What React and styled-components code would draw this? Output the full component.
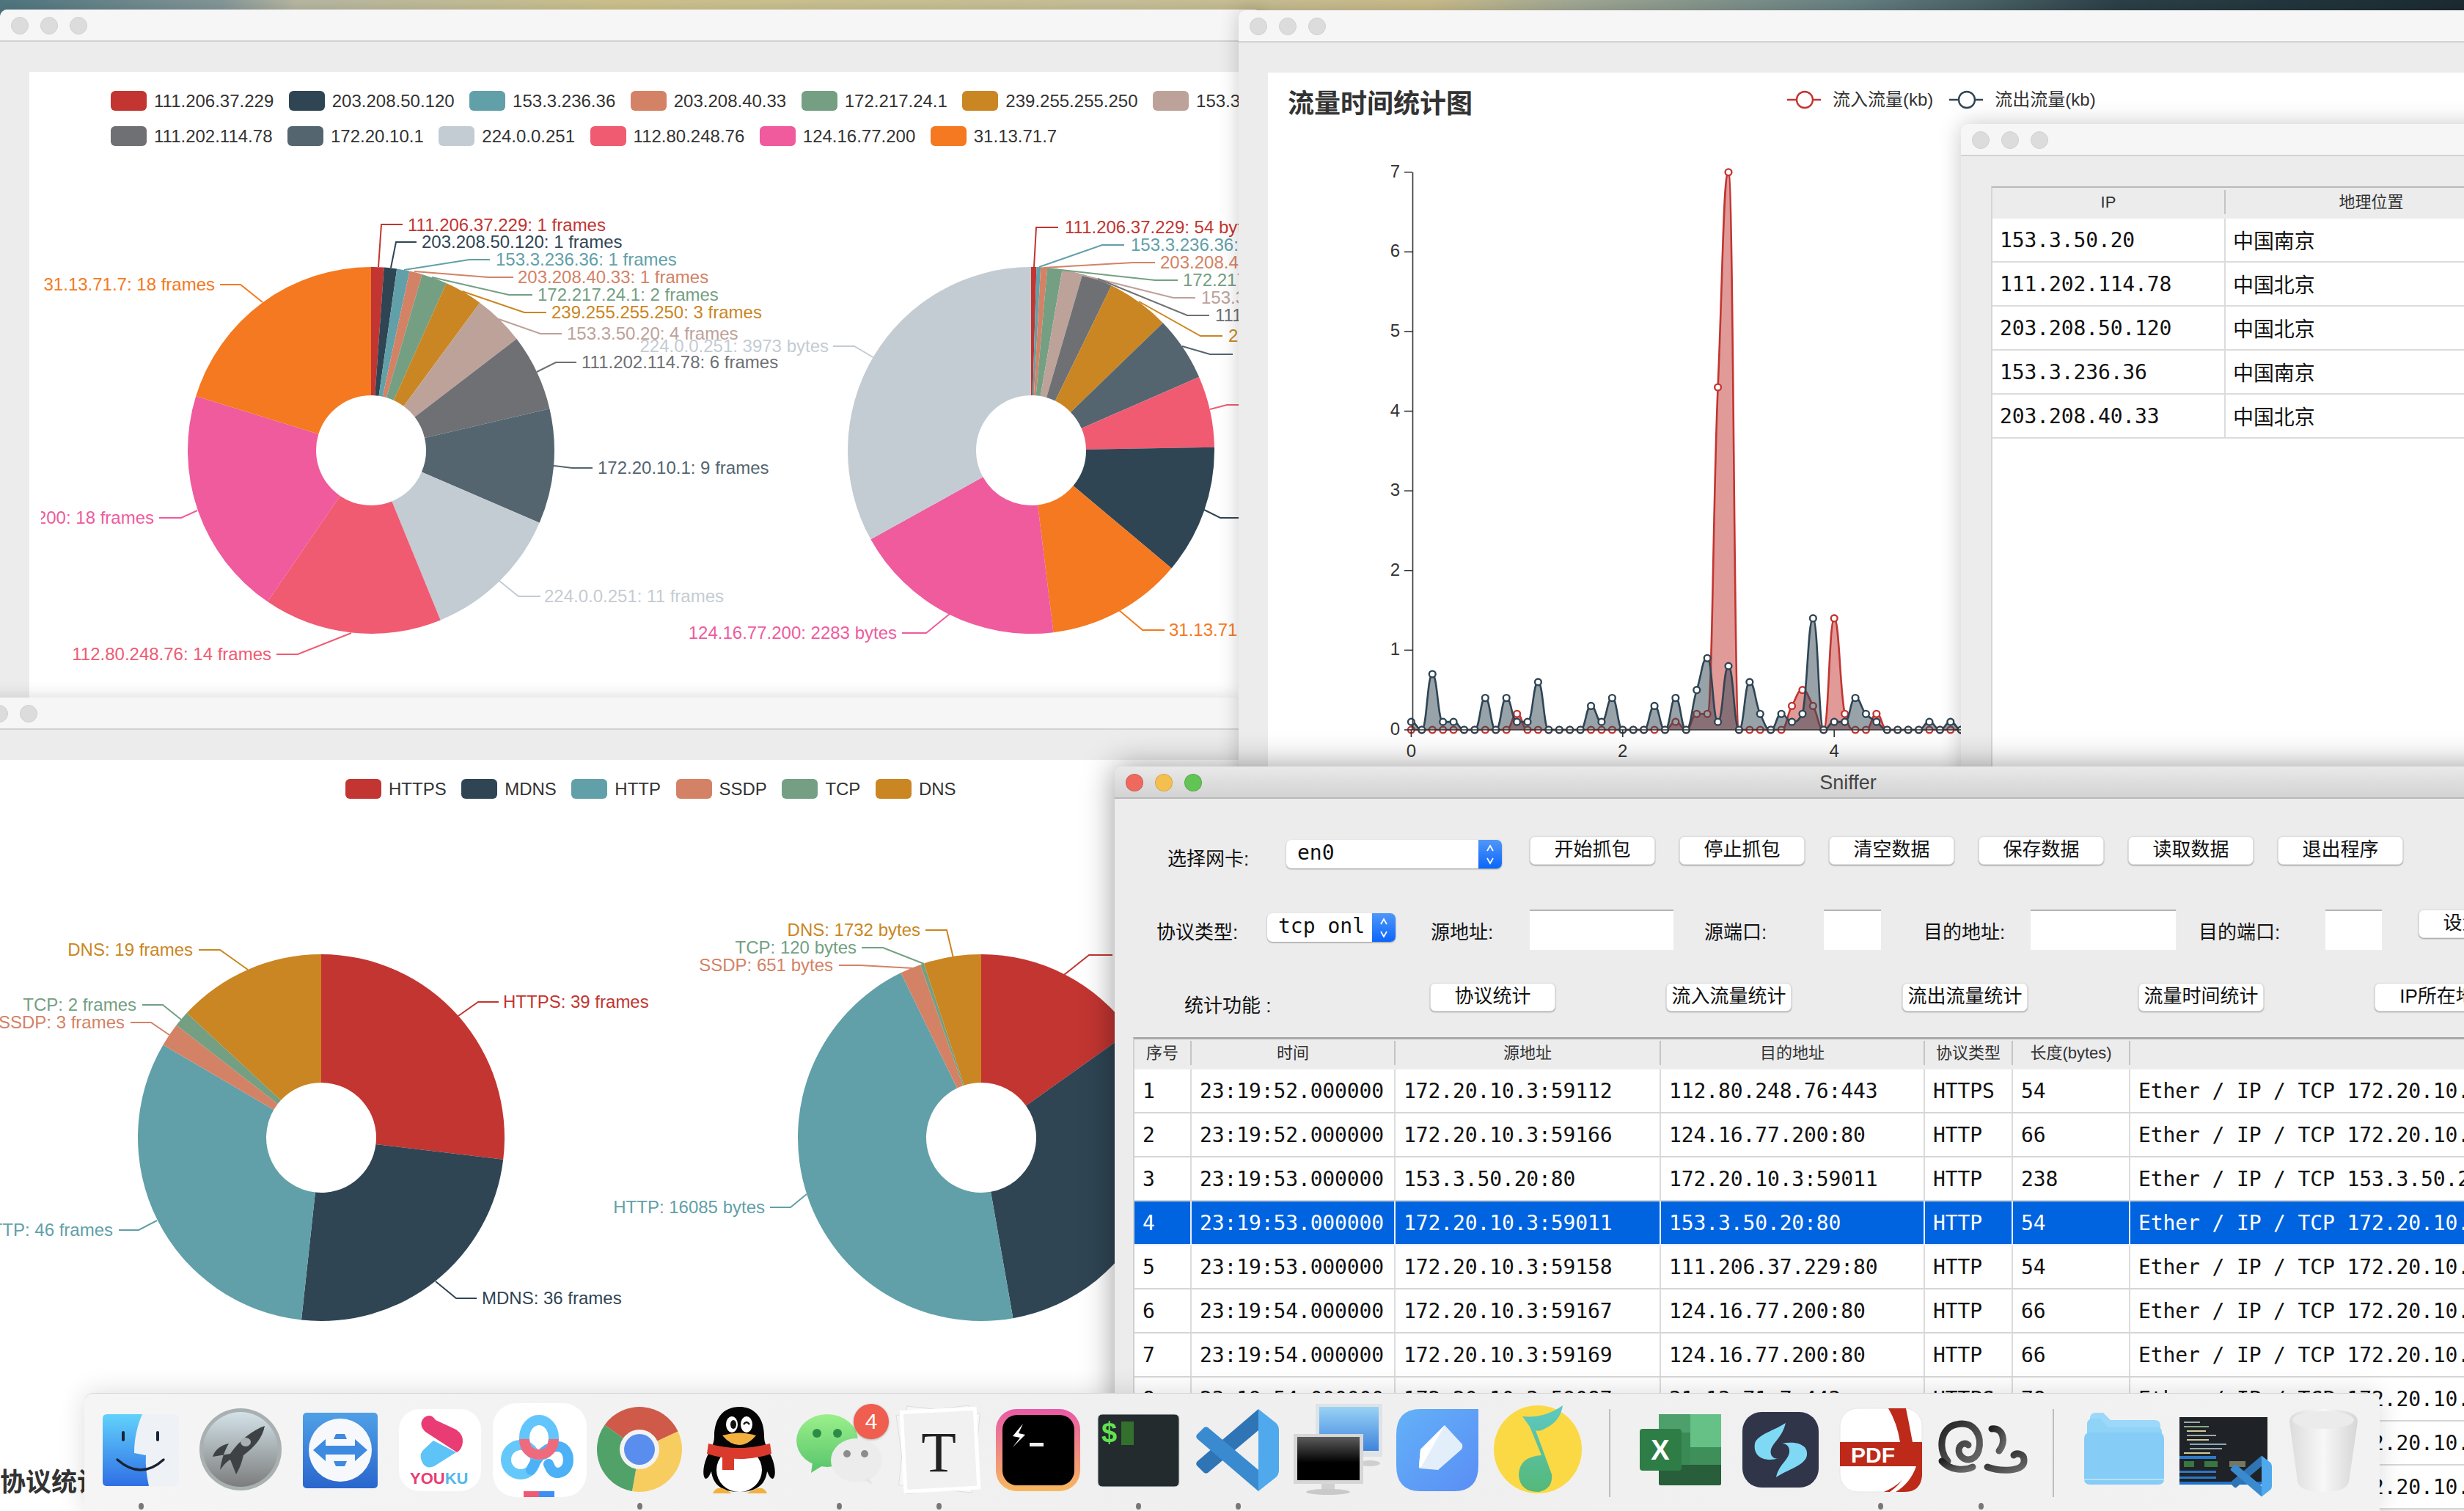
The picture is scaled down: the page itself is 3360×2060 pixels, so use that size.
import React from 'react'
import styled, { createGlobalStyle } from 'styled-components'

const SANS = '"Liberation Sans", "Noto Sans CJK SC", sans-serif'
const MONO = '"DejaVu Sans Mono", "Noto Sans CJK SC", monospace'

const GlobalStyle = createGlobalStyle`
    html, body {
        margin: 0;
        padding: 0;
        background: #ececec;
        overflow: hidden;
    }
    * { box-sizing: border-box; }
`

const Desktop = styled.div`
    position: relative;
    width: 3360px;
    height: 2060px;
    overflow: hidden;
    font-family: ${SANS};
    background: linear-gradient(90deg, #4f7680 0%, #86999a 9%, #b9b9a4 12%, #cfc48e 25%, #c9c29a 45%, #cdbf8e 58%, #a3ab97 64%, #6a8486 75%, #2c4249 86%, #1c2c33 100%);
`

const Window = styled.section`
    position: absolute;
    left: ${p => p.$x}px;
    top: ${p => p.$y}px;
    width: ${p => p.$w}px;
    height: ${p => p.$h}px;
    display: flex;
    flex-direction: column;
    background: #ececec;
    border-radius: 10px 10px 0 0;
    overflow: hidden;
    box-shadow: 0 0 ${p => p.$shadow || 24}px rgba(0, 0, 0, ${p => p.$alpha || 0.16});
`

const TitleBar = styled.header`
    flex: none;
    height: 44px;
    display: flex;
    align-items: center;
    gap: 16px;
    padding: 2px 0 0 15px;
    position: relative;
    background: ${p => p.$active ? 'linear-gradient(#e9e9e9, #d3d3d3)' : '#f6f6f6'};
    border-bottom: 2px solid ${p => p.$active ? '#b9b9b9' : '#d2d2d2'};
`

const Light = styled.span`
    width: 24px;
    height: 24px;
    border-radius: 50%;
    background: ${p => p.$c || '#dcdcdc'};
    border: 1px solid ${p => p.$c ? 'rgba(0,0,0,.12)' : '#d0d0d0'};
`

const WindowTitle = styled.div`
    position: absolute;
    left: 0;
    right: 0;
    text-align: center;
    font-size: 27px;
    color: #444;
`

const ChartPanel = styled.div`
    flex: 1;
    margin-top: ${p => p.$mt || 41}px;
    margin-left: 40px;
    background: #fff;
    display: flex;
    flex-direction: column;
    padding-left: ${p => p.$pl || 0}px;
    min-height: 0;
`

const LegendBar = styled.div`
    height: ${p => p.$h}px;
    flex: none;
    width: ${p => p.$w}px;
    padding: 26px 0 0 ${p => p.$pl}px;
    display: flex;
    flex-wrap: wrap;
    align-content: flex-start;
    gap: 21px 20.5px;
`

const LegendItem = styled.div`
    display: flex;
    align-items: center;
    gap: 10px;
    height: 27px;
    font-size: 24px;
    color: #333;
    white-space: nowrap;
`

const Swatch = styled.span`
    width: 49px;
    height: 27px;
    border-radius: 6px;
    background: ${p => p.$c};
`

const ChartSvg = styled.svg`
    display: block;
    flex: none;
    font-family: ${SANS};
    font-size: 24px;
`

const ChartHead = styled.div`
    flex: none;
    height: 102px;
    display: flex;
    align-items: flex-start;
    padding-left: 27px;
`

const ChartTitle = styled.h2`
    margin: 18px 0 0;
    font-size: 36px;
    line-height: 50px;
    font-weight: 700;
    color: #333;
    font-family: ${SANS};
`

const LineLegend = styled.div`
    display: flex;
    align-items: center;
    margin: 24px 0 0 ${p => p.$ml}px;
    font-size: 24px;
    line-height: 26px;
    color: #333;
    gap: 16px;
`

const BottomTitle = styled.div`
    flex: none;
    padding-left: 28px;
    font-size: 35px;
    font-weight: 700;
    line-height: 42px;
    color: #333;
    white-space: nowrap;
`

const IpTable = styled.div`
    flex: 1;
    margin: 41px 0 0 41px;
    background: #fff;
    border-left: 2px solid #d6d6d6;
    border-top: 2px solid #b9b9b9;
`

const IpRow = styled.div`
    display: grid;
    grid-template-columns: 318px 1fr;
    height: ${p => p.$head ? 42 : 60}px;
    padding-top: ${p => p.$head ? 3 : 0}px;
    background: ${p => p.$head ? '#ececec' : '#fff'};
    border-bottom: ${p => p.$head ? 'none' : '2px solid #dcdcdc'};
    align-items: ${p => p.$head ? 'flex-start' : 'stretch'};
`

const HeadCell = styled.div`
    font-size: 22px;
    text-align: center;
    color: #333;
    height: 33px;
    line-height: 33px;
    border-right: 2px solid #c4c4c4;
    white-space: nowrap;
`

const DataCell = styled.div`
    font-family: ${MONO};
    font-size: 28px;
    letter-spacing: -0.12px;
    display: flex;
    align-items: center;
    padding-left: ${p => p.$pad || 10}px;
    white-space: nowrap;
    overflow: hidden;
    color: ${p => p.$sel ? '#fff' : '#111'};
    border-right: 2px solid ${p => p.$sel ? '#e8f0fc' : '#dcdcdc'};
`

const SnifferBody = styled.div`
    flex: 1;
    padding-top: 51px;
    display: flex;
    flex-direction: column;
`

const ControlRow = styled.div`
    flex: none;
    height: ${p => p.$h || 100}px;
    padding-left: ${p => p.$pl}px;
    display: flex;
    align-items: flex-start;
`

const FieldLabel = styled.label`
    flex: none;
    width: ${p => p.$w}px;
    margin: 12px 0 0 ${p => p.$ml || 0}px;
    font-size: 26px;
    line-height: 38px;
    color: #111;
    white-space: nowrap;
`

const Combo = styled.div`
    flex: none;
    width: ${p => p.$w}px;
    height: 39px;
    margin: 5px 0 0 ${p => p.$ml}px;
    display: flex;
    background: #fff;
    border-radius: 7px;
    box-shadow: 0 1px 2px rgba(0, 0, 0, .4);
    font-family: ${MONO};
    font-size: 28px;
    line-height: 36px;
    color: #111;
    overflow: hidden;
`

const ComboValue = styled.span`
    flex: 1;
    padding-left: 15px;
    white-space: nowrap;
    overflow: hidden;
`

const Stepper = styled.span`
    flex: none;
    width: 32px;
    display: flex;
    align-items: center;
    justify-content: center;
    background: linear-gradient(#4f97f8, #0b66fb);
`

const PushButton = styled.button`
    flex: none;
    width: 171px;
    height: 39px;
    margin-left: ${p => p.$ml || 0}px;
    padding: 0;
    background: #fff;
    border: 1px solid #dedede;
    border-radius: 7px;
    box-shadow: 0 1px 2px rgba(0, 0, 0, .35);
    font-family: ${SANS};
    font-size: 26px;
    line-height: 34px;
    color: #111;
    white-space: nowrap;
    display: flex;
    justify-content: center;
`

const LineInput = styled.div`
    flex: none;
    width: ${p => p.$w}px;
    height: 55px;
    margin-left: ${p => p.$ml}px;
    background: #fff;
    border-top: 2px solid #b4b4b4;
`

const PacketTable = styled.div`
    margin-left: 25px;
    background: #fff;
    border-left: 2px solid #d0d0d0;
    border-top: 3px solid #a8a8a8;
`

const PacketRow = styled.div`
    display: grid;
    grid-template-columns: 78px 278px 362px 360px 120px 160px 1fr;
    height: ${p => p.$head ? 41 : 60}px;
    padding-top: ${p => p.$head ? 2 : 0}px;
    background: ${p => p.$head ? '#ececec' : p.$sel ? '#0064e1' : '#fff'};
    border-bottom: ${p => p.$head ? 'none' : `2px solid ${p.$sel ? '#e8f0fc' : '#d6d6d6'}`};
    align-items: ${p => p.$head ? 'flex-start' : 'stretch'};
`

const Dock = styled.nav`
    position: absolute;
    left: 115px;
    top: 1899px;
    width: 3130px;
    height: 161px;
    display: flex;
    padding: 0 9px;
    background: linear-gradient(90deg, #f5f5f5, #efefef 50%, #f2f2f2);
    border-radius: 12px 12px 0 0;
    border-top: 1px solid #d4d4d4;
    box-shadow: 0 0 36px rgba(0, 0, 0, .14);
`

const DockSlot = styled.div`
    position: relative;
    flex: none;
    width: ${p => p.$w || 136}px;
    height: 160px;
    display: flex;
    flex-direction: column;
    align-items: center;
`

const DockArt = styled.svg`
    display: block;
    flex: none;
`

const RunDot = styled.span`
    width: 7px;
    height: 9px;
    margin-top: 8px;
    border-radius: 50%;
    background: ${p => p.$on ? '#777' : 'transparent'};
`

const Badge = styled.span`
    position: absolute;
    left: 88px;
    top: 14px;
    width: 48px;
    height: 48px;
    border-radius: 50%;
    background: #ef5e4e;
    color: #fff;
    font-size: 30px;
    line-height: 48px;
    text-align: center;
    box-shadow: 0 1px 3px rgba(0, 0, 0, .3);
`

const DockDivider = styled.span`
    flex: none;
    align-self: flex-start;
    width: 2px;
    height: 120px;
    margin: 21px ${p => p.$mr}px 0 ${p => p.$ml}px;
    background: #bdbdbd;
`

// echarts default palette
const C = {
    red: '#c23531', dark: '#2f4554', teal: '#61a0a8', coral: '#d48265', green: '#749f83', gold: '#ca8622',
    taupe: '#bda29a', gray: '#6e7074', slate: '#546570', pale: '#c4ccd3', rose: '#f05b72', pink: '#ef5b9c', orange: '#f47920',
}

const ipLegend = [
    ['111.206.37.229', C.red], ['203.208.50.120', C.dark], ['153.3.236.36', C.teal], ['203.208.40.33', C.coral],
    ['172.217.24.1', C.green], ['239.255.255.250', C.gold], ['153.3.50.20', C.taupe], ['111.202.114.78', C.gray],
    ['172.20.10.1', C.slate], ['224.0.0.251', C.pale], ['112.80.248.76', C.rose], ['124.16.77.200', C.pink], ['31.13.71.7', C.orange],
]
const protoLegend = [['HTTPS', C.red], ['MDNS', C.dark], ['HTTP', C.teal], ['SSDP', C.coral], ['TCP', C.green], ['DNS', C.gold]]

function polar(cx, cy, r, deg) {
    const a = (deg - 90) * Math.PI / 180
    return [cx + r * Math.cos(a), cy + r * Math.sin(a)]
}

function slicePath(cx, cy, r0, r1, a0, a1) {
    const large = a1 - a0 > 180 ? 1 : 0
    const [x0, y0] = polar(cx, cy, r1, a0)
    const [x1, y1] = polar(cx, cy, r1, a1)
    if (r0 === 0) return `M${cx} ${cy}L${x0} ${y0}A${r1} ${r1} 0 ${large} 1 ${x1} ${y1}Z`
    const [x2, y2] = polar(cx, cy, r0, a1)
    const [x3, y3] = polar(cx, cy, r0, a0)
    return `M${x0} ${y0}A${r1} ${r1} 0 ${large} 1 ${x1} ${y1}L${x2} ${y2}A${r0} ${r0} 0 ${large} 0 ${x3} ${y3}Z`
}

// stops: clockwise end angle of each slice, colours in the same order
function Pie({ cx, cy, stops, colors, labels }) {
    return (
        <g>
            {stops.map((end, i) => (
                <path key={i} d={slicePath(cx, cy, 75, 250, i ? stops[i - 1] : 0, end)} fill={colors[i]} />
            ))}
            {labels.map(([text, color, x, y, pts, anchor], i) => (
                <g key={i}>
                    <polyline points={pts} fill="none" stroke={color} strokeWidth="2" />
                    <text x={x} y={y + 8} fill={color} textAnchor={anchor || 'start'}>{text}</text>
                </g>
            ))}
        </g>
    )
}

const framesColors = [C.red, C.dark, C.teal, C.coral, C.green, C.gold, C.taupe, C.gray, C.slate, C.pale, C.rose, C.pink, C.orange]
const frameCounts = [1, 1, 1, 1, 2, 3, 4, 6, 9, 11, 14, 18, 18]
const frameStops = frameCounts.reduce((acc, n) => [...acc, (acc.length ? acc[acc.length - 1] : 0) + n * 360 / 89], [])

const frameLabels = [
    ['111.206.37.229: 1 frames', C.red, 556, 307, '516,364 520,306 549,306'],
    ['203.208.50.120: 1 frames', C.dark, 575, 330, '533,365 540,330 568,330'],
    ['153.3.236.36: 1 frames', C.teal, 676, 354, '551,368 640,354 668,354'],
    ['203.208.40.33: 1 frames', C.coral, 706, 378, '565,370 666,378 700,378'],
    ['172.217.24.1: 2 frames', C.green, 733, 402, '589,378 694,402 726,402'],
    ['239.255.255.250: 3 frames', C.gold, 752, 426, '630,397 715,426 745,426'],
    ['153.3.50.20: 4 frames', C.taupe, 773, 455, '680,435 737,455 766,455'],
    ['111.202.114.78: 6 frames', C.gray, 793, 494, '732,507 758,494 786,494'],
    ['172.20.10.1: 9 frames', C.slate, 815, 638, '755,635 780,638 808,638'],
    ['224.0.0.251: 11 frames', C.pale, 742, 813, '681,792 707,813 737,813'],
    ['112.80.248.76: 14 frames', C.rose, 370, 892, '479,863 406,892 377,892', 'end'],
    ['124.16.77.200: 18 frames', C.pink, 210, 706, '269,696 247,706 217,706', 'end'],
    ['31.13.71.7: 18 frames', C.orange, 293, 388, '358,412 328,388 300,388', 'end'],
]

const byteColors = [C.red, C.teal, C.coral, C.green, C.taupe, C.gray, C.gold, C.slate, C.rose, C.dark, C.orange, C.pink, C.pale]
const byteStops = [1.7, 3, 5.1, 9.8, 16.3, 26, 46, 66.4, 89, 130, 173, 241, 360]
const byteLabels = [
    ['111.206.37.229: 54 bytes', C.red, 1452, 310, '1410,364 1413,310 1443,310'],
    ['153.3.236.36: 54 bytes', C.teal, 1542, 334, '1417,364 1503,334 1533,334'],
    ['203.208.40.33: 66 bytes', C.coral, 1582, 358, '1423,365 1545,358 1575,358'],
    ['172.217.24.1: 132 bytes', C.green, 1613, 382, '1438,367 1575,382 1606,382'],
    ['153.3.50.20: 238 bytes', C.taupe, 1638, 406, '1463,372 1600,406 1630,406'],
    ['111.202.114.78: 330 bytes', C.gray, 1657, 430, '1497,380 1619,430 1649,430'],
    ['239.255.255.250: 651 bytes', C.gold, 1675, 458, '1553,411 1637,458 1667,458'],
    ['172.20.10.1: 680 bytes', C.slate, 1689, 483, '1612,472 1650,483 1681,483'],
    ['112.80.248.76: 756 bytes', C.rose, 1698, 552, '1650,558 1673,552 1692,552'],
    ['203.208.50.120: 1380 bytes', C.dark, 1700, 706, '1642,695 1664,706 1697,706'],
    ['31.13.71.7: 1456 bytes', C.orange, 1594, 859, '1526,832 1558,859 1588,859'],
    ['124.16.77.200: 2283 bytes', C.pink, 1223, 863, '1295,837 1263,863 1230,863', 'end'],
    ['224.0.0.251: 3973 bytes', C.pale, 1130, 472, '1192,488 1165,472 1136,472', 'end'],
]

const protoColors = [C.red, C.dark, C.teal, C.coral, C.green, C.gold]
const protoFrameStops = [39, 75, 121, 124, 126, 145].map(n => n * 360 / 145)
const protoFrameLabels = [
    ['DNS: 19 frames', C.gold, 263, 1295, '338,1322 300,1295 271,1295', 'end'],
    ['TCP: 2 frames', C.green, 186, 1370, '247,1390 222,1370 194,1370', 'end'],
    ['SSDP: 3 frames', C.coral, 170, 1394, '231,1411 206,1394 178,1394', 'end'],
    ['HTTPS: 39 frames', C.red, 686, 1366, '625,1385 652,1366 680,1366'],
    ['HTTP: 46 frames', C.teal, 154, 1677, '214,1664 189,1677 162,1677', 'end'],
    ['MDNS: 36 frames', C.dark, 657, 1770, '594,1747 622,1770 650,1770'],
]
const protoByteStops = [54.5, 170, 334, 340.6, 341.8, 360]
const protoByteLabels = [
    ['DNS: 1732 bytes', C.gold, 1255, 1268, '1300,1306 1291,1268 1262,1268', 'end'],
    ['TCP: 120 bytes', C.green, 1168, 1292, '1260,1314 1204,1292 1175,1292', 'end'],
    ['SSDP: 651 bytes', C.coral, 1136, 1316, '1245,1320 1173,1316 1144,1316', 'end'],
    ['HTTP: 16085 bytes', C.teal, 1043, 1646, '1100,1628 1078,1646 1050,1646', 'end'],
    ['HTTPS: 5320 bytes', C.red, 1524, 1302, '1451,1329 1485,1302 1517,1302'],
]

// flow over time, one value every 0.1 on the x axis
const inFlow = {10: .2, 25: .1, 27: .2, 28: .2, 29: 4.3, 30: 7, 36: .3, 37: .5, 38: .3, 40: 1.4, 41: .2, 44: .2}
const outFlow = {0: .1, 2: .7, 3: .1, 4: .1, 7: .4, 9: .4, 10: .1, 11: .1, 12: .6, 17: .3, 18: .1, 19: .4, 23: .3, 25: .4, 27: .5, 28: .9, 29: .1, 30: .8, 32: .6, 33: .2, 35: .2, 36: .1, 37: .2, 38: 1.4, 40: .1, 41: .1, 42: .4, 43: .2, 44: .1, 49: .1, 51: .1}

const X0 = 1925.4
const Y0 = 994
const toPoints = (series) => Array.from({ length: 54 }, (_, i) => [X0 + i * 14.42, Y0 - (series[i] || 0) * 108.6])

function smoothLine(pts) {
    let d = `M${pts[0][0]} ${pts[0][1]}`
    const clamp = (v, a, b) => Math.min(Math.max(v, Math.min(a, b)), Math.max(a, b))
    // flat tangent on local peaks and valleys, like the echarts monotone smoothing
    const slope = (a, b, c) => ((b[1] - a[1]) * (c[1] - b[1]) <= 0 ? 0 : (c[1] - a[1]) * 0.22)
    for (let i = 0; i < pts.length - 1; i++) {
        const p0 = pts[Math.max(i - 1, 0)], p1 = pts[i], p2 = pts[i + 1], p3 = pts[Math.min(i + 2, pts.length - 1)]
        const c1y = clamp(p1[1] + slope(p0, p1, p2), p1[1], p2[1])
        const c2y = clamp(p2[1] - slope(p1, p2, p3), p1[1], p2[1])
        d += `C${p1[0] + 7} ${c1y} ${p2[0] - 7} ${c2y} ${p2[0]} ${p2[1]}`
    }
    return d
}

function FlowSeries({ data, color }) {
    const pts = toPoints(data)
    const line = smoothLine(pts)
    return (
        <g>
            <path d={`${line}L${pts[pts.length - 1][0]} ${Y0}L${X0} ${Y0}Z`} fill={color} fillOpacity=".5" />
            <path d={line} fill="none" stroke={color} strokeWidth="2.6" />
            {pts.map(([x, y], i) => <circle key={i} cx={x} cy={y} r="4.4" fill="#fff" stroke={color} strokeWidth="2.4" />)}
        </g>
    )
}

function FlowChart() {
    return (
        <ChartSvg viewBox="1730 200 960 860" width="960" height="860">
            <FlowSeries data={inFlow} color={C.red} />
            <FlowSeries data={outFlow} color={C.dark} />
            <path d={`M1927.5 234V${Y0}H2700`} fill="none" stroke="#333" strokeWidth="1.6" />
            {[0, 1, 2, 3, 4, 5, 6, 7].map(n => (
                <g key={n}>
                    <path d={`M1916 ${Y0 - n * 108.6}H1927`} stroke="#333" strokeWidth="1.6" />
                    <text x="1910" y={Y0 - n * 108.6 + 7} textAnchor="end" fill="#333">{n}</text>
                </g>
            ))}
            {[0, 2, 4].map(n => (
                <g key={n}>
                    <path d={`M${X0 + n * 144.2} ${Y0}V${Y0 + 10}`} stroke="#333" strokeWidth="1.6" />
                    <text x={X0 + n * 144.2} y="1031" textAnchor="middle" fill="#333">{n}</text>
                </g>
            ))}
        </ChartSvg>
    )
}

function LegendMarker({ color }) {
    return (
        <svg width="46" height="26" viewBox="0 0 46 26">
            <path d="M0 13H46" stroke={color} strokeWidth="2.4" />
            <circle cx="24" cy="13" r="11" fill="#fff" stroke={color} strokeWidth="2.4" />
        </svg>
    )
}

function StepArrows() {
    return (
        <svg width="14" height="30" viewBox="0 0 14 30" fill="none" stroke="#fff" strokeWidth="1.8">
            <path d="M3 10L7 3L11 10" />
            <path d="M3 20L7 27L11 20" />
        </svg>
    )
}

function Lights({ active }) {
    return (
        <>
            <Light $c={active ? '#ee6a5f' : undefined} />
            <Light $c={active ? '#f5bf4f' : undefined} />
            <Light $c={active ? '#61c454' : undefined} />
        </>
    )
}

const ipRows = [
    ['153.3.50.20', '中国南京'], ['111.202.114.78', '中国北京'], ['203.208.50.120', '中国北京'],
    ['153.3.236.36', '中国南京'], ['203.208.40.33', '中国北京'],
]

const packetHead = ['序号', '时间', '源地址', '目的地址', '协议类型', '长度(bytes)', '']
const packets = [
    ['1', '23:19:52.000000', '172.20.10.3:59112', '112.80.248.76:443', 'HTTPS', '54', 'Ether / IP / TCP 172.20.10.3:59112 > 112.80.248.76:https A'],
    ['2', '23:19:52.000000', '172.20.10.3:59166', '124.16.77.200:80', 'HTTP', '66', 'Ether / IP / TCP 172.20.10.3:59166 > 124.16.77.200:http S'],
    ['3', '23:19:53.000000', '153.3.50.20:80', '172.20.10.3:59011', 'HTTP', '238', 'Ether / IP / TCP 153.3.50.20:http > 172.20.10.3:59011 PA'],
    ['4', '23:19:53.000000', '172.20.10.3:59011', '153.3.50.20:80', 'HTTP', '54', 'Ether / IP / TCP 172.20.10.3:59011 > 153.3.50.20:http A'],
    ['5', '23:19:53.000000', '172.20.10.3:59158', '111.206.37.229:80', 'HTTP', '54', 'Ether / IP / TCP 172.20.10.3:59158 > 111.206.37.229:http A'],
    ['6', '23:19:54.000000', '172.20.10.3:59167', '124.16.77.200:80', 'HTTP', '66', 'Ether / IP / TCP 172.20.10.3:59167 > 124.16.77.200:http S'],
    ['7', '23:19:54.000000', '172.20.10.3:59169', '124.16.77.200:80', 'HTTP', '66', 'Ether / IP / TCP 172.20.10.3:59169 > 124.16.77.200:http S'],
    ['8', '23:19:54.000000', '172.20.10.3:59087', '31.13.71.7:443', 'HTTPS', '78', 'Ether / IP / TCP 172.20.10.3:59087 > 31.13.71.7:https S'],
    ['9', '23:19:54.000000', '172.20.10.3:59087', '31.13.71.7:443', 'HTTPS', '78', 'Ether / IP / TCP 172.20.10.3:59087 > 31.13.71.7:https A'],
    ['10', '23:19:54.000000', '172.20.10.3:59087', '31.13.71.7:443', 'HTTPS', '78', 'Ether / IP / TCP 172.20.10.3:59087 > 31.13.71.7:https A'],
]

/* dock icons, all drawn on a 136x141 box */
const Art = ({ children }) => <DockArt width="136" height="141" viewBox="0 0 136 141">{children}</DockArt>

const FinderIcon = () => (
    <Art>
        <defs>
            <linearGradient id="fa" x1="0" y1="0" x2="0" y2="1"><stop offset="0" stopColor="#62d2fb" /><stop offset="1" stopColor="#2f6fe6" /></linearGradient>
        </defs>
        <rect x="16" y="28" width="104" height="98" rx="6" fill="#eef2f7" />
        <path d="M22 28H70C63 44 59 62 59 81L75 84C74 98 76 112 79 126H22Q16 126 16 120V34Q16 28 22 28Z" fill="url(#fa)" />
        <path d="M44 53V63M91 53V63" stroke="#1a2433" strokeWidth="4" strokeLinecap="round" />
        <path d="M36 90Q68 118 99 90" fill="none" stroke="#1a2433" strokeWidth="3.4" strokeLinecap="round" />
    </Art>
)

const RocketIcon = () => (
    <Art>
        <defs>
            <linearGradient id="ra" x1="0" y1="0" x2="0" y2="1"><stop offset="0" stopColor="#d3e2e8" /><stop offset="1" stopColor="#7c7d7d" /></linearGradient>
        </defs>
        <circle cx="68" cy="76" r="56" fill="#a9b0b2" />
        <circle cx="68" cy="76" r="51" fill="url(#ra)" />
        <path d="M101 44C84 50 66 64 54 82L30 86C33 76 42 70 52 68C46 78 42 90 40 104C46 96 50 92 54 90L62 110C68 100 70 92 72 84C88 72 98 60 101 44Z" fill="#3f4244" />
        <ellipse cx="75" cy="66" rx="7" ry="6" fill="#aab0b2" />
    </Art>
)

const TeamViewerIcon = () => (
    <Art>
        <defs>
            <linearGradient id="ta" x1="0" y1="0" x2="0" y2="1"><stop offset="0" stopColor="#4fa0e6" /><stop offset="1" stopColor="#2a66cd" /></linearGradient>
        </defs>
        <rect x="17" y="26" width="102" height="103" rx="5" fill="url(#ta)" />
        <circle cx="68" cy="77" r="43" fill="#f7f8fb" />
        <path d="M31 77L48 62V71H88V62L105 77L88 92V83H48V92Z" fill="#3d8ae0" />
        <path d="M59 62L62 55H74L77 62ZM59 92L62 99H74L77 92Z" fill="#3d8ae0" />
    </Art>
)

const YoukuIcon = () => (
    <Art>
        <rect x="12" y="21" width="112" height="112" rx="28" fill="#fff" />
        <path d="M59 64L90 80L60 99Q48 104 43 92Q39 82 46 76Z" fill="#5ec3f7" />
        <path d="M46 33Q55 26 62 36L90 49Q100 56 99 66Q98 76 91 80L48 52Q38 42 46 33Z" fill="#ea3c74" />
        <text x="27" y="123" fontFamily={SANS} fontWeight="700" fontSize="22" fill="#ea3c74">YOU<tspan fill="#4fb9ee">KU</tspan></text>
    </Art>
)

const BaiduIcon = () => (
    <Art>
        <rect x="4" y="13" width="128" height="128" rx="32" fill="#fff" />
        <circle cx="42" cy="90" r="20" fill="none" stroke="#64c8fa" strokeWidth="14" />
        <path d="M56 104C66 84 78 72 92 72C112 72 112 108 92 108C84 108 82 100 80 96" fill="none" stroke="#4cb1f7" strokeWidth="14" strokeLinecap="round" />
        <ellipse cx="67" cy="60" rx="20" ry="24" fill="none" stroke="#62c5fb" strokeWidth="14" />
        <path d="M47 62C47 90 87 90 87 62" fill="none" stroke="#ef6a7c" strokeWidth="14" />
        <rect x="46" y="133" width="21" height="8" fill="#ee5a74" />
        <rect x="67" y="133" width="21" height="8" fill="#3d8ef5" />
    </Art>
)

const ChromeIcon = () => (
    <Art>
        <path d={slicePath(68, 76, 0, 58, 305, 425)} fill="#cf5a4a" />
        <path d={slicePath(68, 76, 0, 58, 65, 190)} fill="#f8cd5f" />
        <path d={slicePath(68, 76, 0, 58, 190, 305)} fill="#50a268" />
        <circle cx="68" cy="76" r="27" fill="#f3f3f3" />
        <circle cx="68" cy="76" r="21" fill="#5a8eee" />
    </Art>
)

const QQIcon = () => (
    <Art>
        <path d="M68 18C90 18 102 34 102 58C102 68 106 74 112 86C118 100 118 114 114 116C110 116 108 110 106 106C104 122 94 134 68 134C42 134 32 122 30 106C28 110 26 116 22 116C18 114 18 100 24 86C30 74 34 68 34 58C34 34 46 18 68 18Z" fill="#050505" />
        <ellipse cx="68" cy="104" rx="31" ry="30" fill="#fff" />
        <path d="M26 68Q68 80 110 68L112 82Q68 96 24 82Z" fill="#d93a2c" />
        <rect x="45" y="84" width="16" height="20" fill="#d93a2c" />
        <ellipse cx="58" cy="42" rx="8" ry="11" fill="#fff" />
        <ellipse cx="78" cy="42" rx="8" ry="11" fill="#fff" />
        <ellipse cx="60" cy="42" rx="4" ry="6" fill="#111" />
        <path d="M74 42Q78 36 82 42" fill="none" stroke="#111" strokeWidth="2.4" />
        <path d="M45 57Q68 50 91 57Q80 70 68 70Q56 70 45 57Z" fill="#f2b13f" />
        <path d="M32 136Q36 126 48 130L58 136ZM78 136L90 130Q102 126 106 136Z" fill="#f2b13f" />
    </Art>
)

const WeChatIcon = () => (
    <Art>
        <defs>
            <linearGradient id="wa" x1="0" y1="0" x2="0" y2="1"><stop offset="0" stopColor="#9af08a" /><stop offset="1" stopColor="#5ec86e" /></linearGradient>
        </defs>
        <ellipse cx="52" cy="64" rx="42" ry="36" fill="url(#wa)" />
        <path d="M32 94L30 108L46 98Z" fill="#5ec86e" />
        <circle cx="38" cy="54" r="6" fill="#2d8b48" />
        <circle cx="66" cy="54" r="6" fill="#2d8b48" />
        <ellipse cx="92" cy="91" rx="35" ry="30" fill="#ececec" />
        <path d="M108 114L114 124L102 118Z" fill="#e6e6e6" />
        <circle cx="79" cy="82" r="5" fill="#8c8c8c" />
        <circle cx="103" cy="82" r="5" fill="#8c8c8c" />
    </Art>
)

const TyporaIcon = () => (
    <Art>
        <rect x="17" y="22" width="100" height="108" fill="#f4f4f4" stroke="#ddd" transform="rotate(-8 68 76)" />
        <rect x="19" y="22" width="100" height="108" fill="#f7f7f7" stroke="#ddd" transform="rotate(6 68 76)" />
        <rect x="20" y="23" width="100" height="108" fill="#f1f1f1" stroke="#fff" strokeWidth="5" transform="rotate(-3 68 76)" />
        <text x="68" y="106" textAnchor="middle" fontFamily='"Liberation Serif", serif' fontSize="78" fill="#222">T</text>
    </Art>
)

const HyperIcon = () => (
    <Art>
        <defs>
            <linearGradient id="ha" x1="0" y1="0" x2="0" y2="1"><stop offset="0" stopColor="#e95aa8" /><stop offset="1" stopColor="#f7b85d" /></linearGradient>
        </defs>
        <rect x="10" y="21" width="115" height="112" rx="28" fill="url(#ha)" />
        <rect x="19" y="29" width="98" height="96" rx="20" fill="#000" />
        <path d="M47 41L33 58L43 60L33 73L50 56L41 54Z" fill="#fff" />
        <rect x="56" y="67" width="19" height="5" fill="#eee" />
    </Art>
)

const TerminalIcon = () => (
    <Art>
        <rect x="13" y="28" width="111" height="99" rx="6" fill="#232b2e" stroke="#d8dedf" strokeWidth="1" />
        <rect x="45" y="38" width="17" height="32" fill="#33702d" />
        <text x="18" y="66" fontFamily={SANS} fontWeight="700" fontSize="38" fill="#62e24f">$</text>
    </Art>
)

const VSCodeMark = () => (
    <>
        <path d="M96 21V50L27 108Q23 110 20 106L12 98Q10 95 13 92Z" fill="#2f74b5" />
        <path d="M96 133V104L27 46Q23 44 20 48L12 56Q10 59 13 62Z" fill="#3a8ad0" />
        <path d="M96 21L120 40Q124 44 124 50V104Q124 110 120 114L96 133Z" fill="#4fa9ec" />
    </>
)

const VSCodeIcon = () => <Art><VSCodeMark /></Art>

const RemoteIcon = () => (
    <Art>
        <defs>
            <linearGradient id="ma" x1="0" y1="0" x2="0" y2="1"><stop offset="0" stopColor="#98d2f5" /><stop offset="1" stopColor="#3f84dc" /></linearGradient>
            <linearGradient id="mb" x1="0" y1="0" x2="0" y2="1"><stop offset="0" stopColor="#5c5c5c" /><stop offset=".6" stopColor="#000" /></linearGradient>
        </defs>
        <rect x="38" y="14" width="91" height="72" fill="#dfe3e6" />
        <rect x="43" y="18" width="81" height="60" fill="url(#ma)" />
        <ellipse cx="112" cy="95" rx="14" ry="4" fill="#cfcfcf" />
        <rect x="8" y="55" width="95" height="68" fill="#d6d6d6" />
        <rect x="13" y="59" width="85" height="59" fill="url(#mb)" />
        <rect x="46" y="123" width="18" height="8" fill="#d0d0d0" />
        <ellipse cx="55" cy="134" rx="30" ry="4" fill="#c9c9c9" />
    </Art>
)

const PenIcon = () => (
    <Art>
        <defs>
            <linearGradient id="pa" x1="0" y1="0" x2="1" y2="1"><stop offset="0" stopColor="#63b1f8" /><stop offset="1" stopColor="#5a8ef5" /></linearGradient>
        </defs>
        <path d="M124 21V98Q124 133 91 133H45Q12 133 12 98V56Q12 21 45 21Z" fill="url(#pa)" />
        <path d="M78 43L102 69Q103 73 101 76L69 104L45 102Q42 102 43 98L45 76Z" fill="#e3eefb" />
        <path d="M78 43L45 76L43 98Q43 101 46 100Z" fill="#fff" />
    </Art>
)

const MusicIcon = () => (
    <Art>
        <defs>
            <linearGradient id="qa" x1="0" y1="0" x2="0" y2="1"><stop offset="0" stopColor="#5dc9c4" /><stop offset="1" stopColor="#55b878" /></linearGradient>
        </defs>
        <circle cx="69" cy="76" r="60" fill="#fbd944" />
        <path d="M48 31Q78 34 103 16Q100 38 78 48Q72 52 66 50L88 110Q90 130 70 134Q44 134 43 110Q44 86 74 84L58 45Z" fill="url(#qa)" />
    </Art>
)

const ExcelIcon = () => (
    <Art>
        <rect x="39" y="28" width="85" height="97" rx="3" fill="#3a8a55" />
        <rect x="39" y="28" width="43" height="25" fill="#4da06b" />
        <rect x="82" y="28" width="42" height="45" fill="#66c187" />
        <rect x="82" y="73" width="42" height="24" fill="#3f8f5a" />
        <path d="M39 97H124V122Q124 125 121 125H42Q39 125 39 122Z" fill="#285e39" />
        <rect x="13" y="48" width="57" height="57" rx="4" fill="#2f7d46" />
        <text x="41" y="90" textAnchor="middle" fontFamily={SANS} fontWeight="700" fontSize="38" fill="#fff">X</text>
    </Art>
)

const SwiftIcon = () => (
    <Art>
        <rect x="16" y="25" width="104" height="103" rx="26" fill="#313549" />
        <path d="M75 40C70 60 58 66 55 76C53 84 58 90 66 88C46 94 30 86 33 68C36 56 60 50 75 40Z" fill="#7fd9f5" />
        <path d="M62 114C66 96 78 92 80 80C81 73 77 68 70 68C90 64 106 70 104 84C102 98 76 104 62 114Z" fill="#7fd9f5" />
    </Art>
)

const PdfIcon = () => (
    <Art>
        <rect x="12" y="20" width="112" height="114" rx="24" fill="#fff" stroke="#e6e6e6" />
        <path d="M78 20H102Q107 44 111 66H94Q90 40 78 20Z" fill="#bd2a1a" />
        <rect x="12" y="66" width="112" height="33" fill="#bd2a1a" />
        <path d="M124 99V112Q122 134 100 134H72Q100 122 110 99Z" fill="#bd2a1a" />
        <path d="M116 99Q108 122 88 134H80Q100 120 106 99Z" fill="#fff" />
        <text x="27" y="94" fontFamily={SANS} fontWeight="700" fontSize="30" fill="#fff">PDF</text>
    </Art>
)

const CloudIcon = () => (
    <Art>
        <defs>
            <linearGradient id="ca" x1="0" y1="0" x2="1" y2="1"><stop offset="0" stopColor="#222" /><stop offset="1" stopColor="#6a6a6a" /></linearGradient>
        </defs>
        <g fill="none" stroke="url(#ca)" strokeWidth="9" strokeLinecap="round">
            <path d="M22 92C8 76 12 46 34 42C58 36 70 58 64 78C60 92 44 94 38 82C34 72 44 64 50 70" />
            <path d="M82 48C98 46 102 66 92 78" />
            <path d="M14 92C24 104 44 106 56 100" />
            <path d="M76 100C92 106 128 108 126 90C126 82 116 80 112 84" />
        </g>
    </Art>
)

const FolderIcon = () => (
    <Art>
        <path d="M22 34Q22 26 30 26H40L50 36H110Q118 36 118 44V60H22Z" fill="#9cd8f9" />
        <path d="M18 42Q18 34 26 34H36L46 46H114Q120 46 120 52V70H18Z" fill="#8fd3f7" />
        <path d="M14 62Q14 53 22 53H115Q123 53 123 62V116Q123 124 115 124H22Q14 124 14 116Z" fill="#85cdf6" />
        <rect x="14" y="116" width="109" height="2" fill="#b4e0fa" />
    </Art>
)

const codeLines = [[14, 38, 22, '#9aa'], [14, 44, 34, '#8a8'], [18, 50, 26, '#cc9'], [18, 56, 40, '#9aa'], [18, 62, 30, '#cc9'], [22, 68, 50, '#8ab'], [22, 74, 44, '#9aa'], [14, 80, 36, '#cc9']]

const ScreenshotIcon = () => (
    <Art>
        <rect x="8" y="32" width="120" height="92" fill="#1f2227" />
        {codeLines.map(([x, y, w, c], i) => <rect key={i} x={x} y={y} width={w} height="2" fill={c} />)}
        <rect x="8" y="85" width="50" height="4" fill="#2b79c9" />
        <rect x="14" y="92" width="14" height="8" fill="#4caf50" opacity=".6" />
        <rect x="42" y="92" width="18" height="8" fill="#4caf50" opacity=".6" />
        <rect x="76" y="92" width="22" height="8" fill="#cc9" opacity=".5" />
        <rect x="8" y="105" width="50" height="3" fill="#2b79c9" />
        <rect x="8" y="113" width="50" height="3" fill="#2b79c9" />
        <rect x="8" y="120" width="120" height="4" fill="#1f73c9" />
        <g transform="translate(72 74) scale(.5)"><VSCodeMark /></g>
    </Art>
)

const TrashIcon = () => (
    <Art>
        <defs>
            <linearGradient id="ba" x1="0" y1="0" x2="1" y2="0"><stop offset="0" stopColor="#dcdcdc" /><stop offset=".5" stopColor="#f7f7f7" /><stop offset="1" stopColor="#d6d6d6" /></linearGradient>
        </defs>
        <path d="M22 38Q22 21 68 21Q115 21 115 38L103 120Q100 134 68 134Q36 134 33 120Z" fill="url(#ba)" />
        <ellipse cx="68" cy="36" rx="42" ry="12" fill="#ebebeb" />
    </Art>
)

const dockLeft = [
    [FinderIcon, true], [RocketIcon], [TeamViewerIcon], [YoukuIcon], [BaiduIcon], [ChromeIcon, true], [QQIcon],
    [WeChatIcon, true, 4], [TyporaIcon, true], [HyperIcon], [TerminalIcon, true], [VSCodeIcon, true], [RemoteIcon], [PenIcon], [MusicIcon],
]
const dockMid = [[ExcelIcon], [SwiftIcon], [PdfIcon, true], [CloudIcon, true]]
const dockRight = [[FolderIcon], [ScreenshotIcon], [TrashIcon]]

function DockIcons({ items, width }) {
    return items.map(([Icon, on, badge], i) => (
        <DockSlot key={i} $w={width}>
            <Icon />
            <RunDot $on={on} />
            {badge ? <Badge>{badge}</Badge> : null}
        </DockSlot>
    ))
}

export default function App() {
    return (
        <Desktop>
            <GlobalStyle />

            <Window $x={0} $y={13} $w={1720} $h={960}>
                <TitleBar><Lights /></TitleBar>
                <ChartPanel $pl={16}>
                    <LegendBar $h={142} $w={1820} $pl={95}>
                        {ipLegend.map(([name, c]) => <LegendItem key={name}><Swatch $c={c} />{name}</LegendItem>)}
                    </LegendBar>
                    <ChartSvg viewBox="56 240 1660 690" width="1660" height="690">
                        <Pie cx={506} cy={614} stops={frameStops} colors={framesColors} labels={frameLabels} />
                        <Pie cx={1406} cy={614} stops={byteStops} colors={byteColors} labels={byteLabels} />
                    </ChartSvg>
                </ChartPanel>
            </Window>

            <Window $x={-68} $y={951} $w={1760} $h={1109}>
                <TitleBar><Lights /></TitleBar>
                <ChartPanel>
                    <LegendBar $h={74} $w={1700} $pl={499}>
                        {protoLegend.map(([name, c]) => <LegendItem key={name}><Swatch $c={c} />{name}</LegendItem>)}
                    </LegendBar>
                    <ChartSvg viewBox="-28 1110 1700 890" width="1700" height="890">
                        <Pie cx={438} cy={1551} stops={protoFrameStops} colors={protoColors} labels={protoFrameLabels} />
                        <Pie cx={1338} cy={1551} stops={protoByteStops} colors={protoColors} labels={protoByteLabels} />
                    </ChartSvg>
                    <BottomTitle>协议统计图</BottomTitle>
                </ChartPanel>
            </Window>

            <Window $x={1689} $y={14} $w={1700} $h={1100} $shadow={28} $alpha={0.2}>
                <TitleBar><Lights /></TitleBar>
                <ChartPanel>
                    <ChartHead>
                        <ChartTitle>流量时间统计图</ChartTitle>
                        <LineLegend $ml={429}><LegendMarker color={C.red} />流入流量(kb)</LineLegend>
                        <LineLegend $ml={22}><LegendMarker color={C.dark} />流出流量(kb)</LineLegend>
                    </ChartHead>
                    <FlowChart />
                </ChartPanel>
            </Window>

            <Window $x={2674} $y={169} $w={760} $h={950} $shadow={30} $alpha={0.22}>
                <TitleBar><Lights /></TitleBar>
                <IpTable>
                    <IpRow $head>
                        <HeadCell>IP</HeadCell>
                        <HeadCell>地理位置</HeadCell>
                    </IpRow>
                    {ipRows.map(([ip, place]) => (
                        <IpRow key={ip}>
                            <DataCell>{ip}</DataCell>
                            <DataCell>{place}</DataCell>
                        </IpRow>
                    ))}
                </IpTable>
            </Window>

            <Window $x={1520} $y={1045} $w={2000} $h={1020} $shadow={44} $alpha={0.4}>
                <TitleBar $active>
                    <Lights active />
                    <WindowTitle>Sniffer</WindowTitle>
                </TitleBar>
                <SnifferBody>
                    <ControlRow $pl={72}>
                        <FieldLabel $w={115}>选择网卡:</FieldLabel>
                        <Combo $w={294} $ml={47}><ComboValue>en0</ComboValue><Stepper><StepArrows /></Stepper></Combo>
                        <PushButton $ml={38}>开始抓包</PushButton>
                        <PushButton $ml={33}>停止抓包</PushButton>
                        <PushButton $ml={33}>清空数据</PushButton>
                        <PushButton $ml={33}>保存数据</PushButton>
                        <PushButton $ml={33}>读取数据</PushButton>
                        <PushButton $ml={33}>退出程序</PushButton>
                    </ControlRow>
                    <ControlRow $pl={57}>
                        <FieldLabel $w={113}>协议类型:</FieldLabel>
                        <Combo $w={175} $ml={38}><ComboValue>tcp onl</ComboValue><Stepper><StepArrows /></Stepper></Combo>
                        <FieldLabel $w={86} $ml={48}>源地址:</FieldLabel>
                        <LineInput $w={196} $ml={49} />
                        <FieldLabel $w={87} $ml={42}>源端口:</FieldLabel>
                        <LineInput $w={78} $ml={76} />
                        <FieldLabel $w={111} $ml={58}>目的地址:</FieldLabel>
                        <LineInput $w={198} $ml={35} />
                        <FieldLabel $w={112} $ml={31}>目的端口:</FieldLabel>
                        <LineInput $w={77} $ml={61} />
                        <PushButton $ml={50}>设置过滤</PushButton>
                    </ControlRow>
                    <ControlRow $pl={95} $h={74}>
                        <FieldLabel $w={120}>统计功能 :</FieldLabel>
                        <PushButton $ml={215}>协议统计</PushButton>
                        <PushButton $ml={151}>流入流量统计</PushButton>
                        <PushButton $ml={151}>流出流量统计</PushButton>
                        <PushButton $ml={151}>流量时间统计</PushButton>
                        <PushButton $ml={151}>IP所在地</PushButton>
                    </ControlRow>
                    <PacketTable>
                        <PacketRow $head>
                            {packetHead.map((h, i) => <HeadCell key={i}>{h}</HeadCell>)}
                        </PacketRow>
                        {packets.map((row) => (
                            <PacketRow key={row[0]} $sel={row[0] === '4'}>
                                {row.map((v, i) => <DataCell key={i} $pad={11} $sel={row[0] === '4'}>{v}</DataCell>)}
                            </PacketRow>
                        ))}
                    </PacketTable>
                </SnifferBody>
            </Window>

            <Dock>
                <DockIcons items={dockLeft} />
                <DockDivider $ml={30} $mr={26} />
                <DockIcons items={dockMid} width={137} />
                <DockDivider $ml={29} $mr={27} />
                <DockIcons items={dockRight} />
            </Dock>
        </Desktop>
    )
}
